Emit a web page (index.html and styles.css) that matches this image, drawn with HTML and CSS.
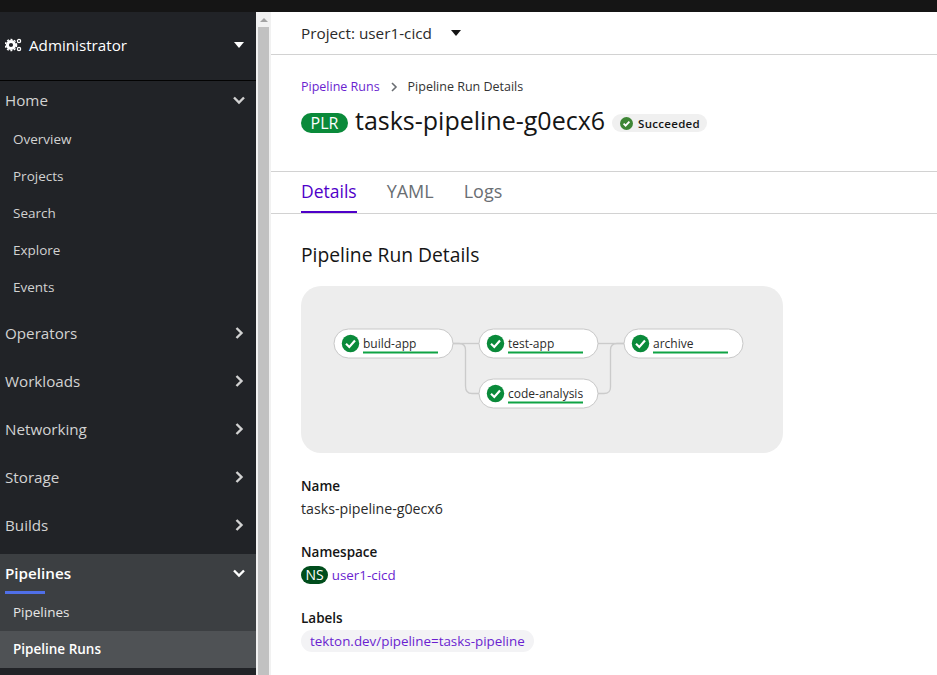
FILE: index.html
```html
<!DOCTYPE html>
<html lang="en">
<head>
    <meta charset="UTF-8">
    <title>Pipeline Run Details</title>
    <link rel="stylesheet" href="styles.css">
</head>
<body>
    <div class="masthead"></div>
    <div class="layout">
        <!-- Sidebar -->
        <nav class="sidebar">
            <div class="perspective">
                <svg class="gears" width="17" height="14" viewBox="0 0 17 14">
                    <circle cx="6" cy="7" r="3.6" fill="none" stroke="#fff" stroke-width="3"/>
                    <circle cx="6" cy="7" r="5.6" fill="none" stroke="#fff" stroke-width="1.4" stroke-dasharray="2 1.6"/>
                    <circle cx="14" cy="3" r="1.6" fill="none" stroke="#fff" stroke-width="1.3"/>
                    <circle cx="14" cy="11" r="1.6" fill="none" stroke="#fff" stroke-width="1.3"/>
                </svg>
                <span class="perspective-name">Administrator</span>
                <span class="caret caret-white"></span>
            </div>
            <div class="nav-group nav-home">
                <div class="nav-title">Home <svg class="chev" width="12" height="12" viewBox="0 0 12 12"><path d="M1 3.5 6 8.5 11 3.5" /></svg></div>
                <a class="nav-sub">Overview</a>
                <a class="nav-sub">Projects</a>
                <a class="nav-sub">Search</a>
                <a class="nav-sub">Explore</a>
                <a class="nav-sub">Events</a>
            </div>
            <div class="nav-title nav-closed">Operators <svg class="chev" width="12" height="12" viewBox="0 0 12 12"><path d="M3.5 1 8.5 6 3.5 11" /></svg></div>
            <div class="nav-title nav-closed">Workloads <svg class="chev" width="12" height="12" viewBox="0 0 12 12"><path d="M3.5 1 8.5 6 3.5 11" /></svg></div>
            <div class="nav-title nav-closed">Networking <svg class="chev" width="12" height="12" viewBox="0 0 12 12"><path d="M3.5 1 8.5 6 3.5 11" /></svg></div>
            <div class="nav-title nav-closed">Storage <svg class="chev" width="12" height="12" viewBox="0 0 12 12"><path d="M3.5 1 8.5 6 3.5 11" /></svg></div>
            <div class="nav-title nav-closed">Builds <svg class="chev" width="12" height="12" viewBox="0 0 12 12"><path d="M3.5 1 8.5 6 3.5 11" /></svg></div>
            <div class="nav-group nav-active">
                <div class="nav-title">Pipelines <svg class="chev" width="12" height="12" viewBox="0 0 12 12"><path d="M1 3.5 6 8.5 11 3.5" /></svg></div>
                <a class="nav-sub">Pipelines</a>
                <a class="nav-sub nav-current">Pipeline Runs</a>
            </div>
        </nav>

        <!-- Scrollbar -->
        <div class="scrollbar">
            <div class="scroll-up"></div>
            <div class="scroll-thumb"></div>
        </div>

        <main class="content">
            <div class="project-bar">
                <span>Project: user1-cicd</span>
                <span class="caret"></span>
            </div>

            <div class="page-head">
                <div class="breadcrumb">
                    <a class="link">Pipeline Runs</a>
                    <svg width="8" height="10" viewBox="0 0 8 10"><path d="M2 1 6 5 2 9" fill="none" stroke="#6a6e73" stroke-width="1.6"/></svg>
                    <span>Pipeline Run Details</span>
                </div>
                <div class="title-row">
                    <span class="badge badge-plr">PLR</span>
                    <h1>tasks-pipeline-g0ecx6</h1>
                    <span class="status">
                        <svg width="13" height="13" viewBox="0 0 13 13"><circle cx="6.5" cy="6.5" r="6.5" fill="#3e8635"/><path d="M3.6 6.7 5.6 8.7 9.4 4.6" fill="none" stroke="#fff" stroke-width="1.8"/></svg>
                        Succeeded
                    </span>
                </div>
            </div>

            <div class="tabs">
                <a class="tab tab-active">Details</a>
                <a class="tab">YAML</a>
                <a class="tab">Logs</a>
            </div>

            <section class="details">
                <h2>Pipeline Run Details</h2>

                <div class="graph">
                    <svg width="482" height="167" viewBox="0 0 482 167">
                        <g fill="none" stroke="#cbcbcb" stroke-width="1.3">
                            <path d="M152 57.500H178"/>
                            <path d="M152 57.500H158Q164.500 57.500 164.500 64V100Q164.500 107.500 171 107.500H178"/>
                            <path d="M297 57.500H323"/>
                            <path d="M297 107.500H303Q309.500 107.500 309.500 101V64Q309.500 57.500 316 57.500H323"/>
                        </g>

                        <g class="node" transform="translate(33 43)">
                            <rect class="node-box" width="119" height="29" rx="14.500"/>
                            <circle class="node-ok" cx="16.500" cy="14.500" r="8.700"/>
                            <path class="node-check" d="M12 14.800 15.300 18 21 11.600"/>
                            <text x="29" y="18.500">build-app</text>
                            <line class="node-line" x1="29" y1="23.500" x2="104" y2="23.500"/>
                        </g>
                        <g class="node" transform="translate(178 43)">
                            <rect class="node-box" width="119" height="29" rx="14.500"/>
                            <circle class="node-ok" cx="16.500" cy="14.500" r="8.700"/>
                            <path class="node-check" d="M12 14.800 15.300 18 21 11.600"/>
                            <text x="29" y="18.500">test-app</text>
                            <line class="node-line" x1="29" y1="23.500" x2="104" y2="23.500"/>
                        </g>
                        <g class="node" transform="translate(178 93)">
                            <rect class="node-box" width="119" height="29" rx="14.500"/>
                            <circle class="node-ok" cx="16.500" cy="14.500" r="8.700"/>
                            <path class="node-check" d="M12 14.800 15.300 18 21 11.600"/>
                            <text x="29" y="18.500">code-analysis</text>
                            <line class="node-line" x1="29" y1="23.500" x2="104" y2="23.500"/>
                        </g>
                        <g class="node" transform="translate(323 43)">
                            <rect class="node-box" width="119" height="29" rx="14.500"/>
                            <circle class="node-ok" cx="16.500" cy="14.500" r="8.700"/>
                            <path class="node-check" d="M12 14.800 15.300 18 21 11.600"/>
                            <text x="29" y="18.500">archive</text>
                            <line class="node-line" x1="29" y1="23.500" x2="104" y2="23.500"/>
                        </g>
                    </svg>
                </div>

                <dl class="props">
                    <dt>Name</dt>
                    <dd>tasks-pipeline-g0ecx6</dd>
                    <dt>Namespace</dt>
                    <dd><span class="badge badge-ns">NS</span> <a class="link">user1-cicd</a></dd>
                    <dt>Labels</dt>
                    <dd><a class="label-chip link">tekton.dev/pipeline=tasks-pipeline</a></dd>
                </dl>
            </section>
        </main>
    </div>
</body>
</html>
```

FILE: styles.css
```css
html, body {
    height: 100%;
}
body {
    margin: 0;
    overflow: hidden;
    font-family: "Open Sans", "Noto Sans", sans-serif;
    font-size: 14px;
    color: #151515;
    background: #fff;
}
.masthead {
    height: 12px;
    background: #151515;
}
.layout {
    display: flex;
    height: 663px;
}

/* Sidebar */
.sidebar {
    width: 256px;
    flex: none;
    background: #212327;
    color: #d2d2d2;
    overflow: hidden;
}
.perspective {
    box-sizing: border-box;
    height: 69px;
    display: flex;
    align-items: center;
    padding: 0 12px 2px 5px;
    border-bottom: 1px solid #030303;
    color: #fff;
    font-size: 15.200px;
    font-weight: 500;
}
.gears {
    margin-right: 7px;
}
.perspective-name {
    flex: 1;
}
.caret {
    display: inline-block;
    width: 0;
    height: 0;
    border-left: 5px solid transparent;
    border-right: 5px solid transparent;
    border-top: 6px solid #151515;
}
.caret-white {
    border-top-color: #fff;
}
.nav-title {
    display: flex;
    justify-content: space-between;
    align-items: center;
    height: 38px;
    padding: 0 11px 0 5px;
    font-size: 15.200px;
}
.nav-closed {
    height: 48px;
}
.chev {
    fill: none;
    stroke: #d2d2d2;
    stroke-width: 2.4;
}
.nav-group .nav-title {
    margin-bottom: 2px;
}
.nav-sub {
    display: block;
    height: 37px;
    line-height: 37px;
    padding-left: 13px;
    font-size: 13.500px;
}
.nav-home {
    margin-bottom: 3px;
}
.nav-active {
    margin-top: 5px;
    background: #3c3f42;
    color: #fff;
    position: relative;
}
.nav-active .nav-title {
    font-weight: 600;
}
.nav-active .chev {
    stroke: #fff;
}
/* blue bar under the active section title */
.nav-active::before {
    content: "";
    position: absolute;
    left: 5px;
    top: 37px;
    width: 40px;
    height: 3px;
    background: #4f6fe8;
}
.nav-active .nav-sub {
    color: #e6e6e6;
}
.nav-active .nav-current {
    background: #4f5255;
    color: #fff;
    font-weight: 600;
}

/* Scrollbar */
.scrollbar {
    width: 15px;
    flex: none;
    background: #f1f1f1;
}
.scroll-up {
    height: 15px;
    position: relative;
}
.scroll-up::after {
    content: "";
    position: absolute;
    left: 4px;
    top: 6px;
    border-left: 4px solid transparent;
    border-right: 4px solid transparent;
    border-bottom: 4px solid #a3a3a3;
}
.scroll-thumb {
    height: 648px;
    margin: 0 2px;
    background: #c1c1c1;
}

/* Content */
.content {
    flex: 1;
    min-width: 0;
}
.project-bar {
    height: 42px;
    display: flex;
    align-items: center;
    gap: 19px;
    padding-left: 30px;
    border-bottom: 1px solid #d2d2d2;
    font-size: 15.300px;
    color: #2a2a2a;
}
.page-head {
    height: 116px;
    padding-left: 30px;
    border-bottom: 1px solid #d2d2d2;
}
.breadcrumb {
    display: flex;
    align-items: center;
    gap: 10px;
    padding-top: 23px;
    font-size: 12.500px;
    line-height: 18px;
    color: #333;
}
.link {
    color: #6a1fd0;
}
.title-row {
    display: flex;
    align-items: center;
    margin-top: 6px;
}
h1 {
    margin: 0 7px;
    font-size: 25px;
    line-height: 36px;
    font-weight: 400;
}
.badge {
    display: inline-block;
    border-radius: 10px;
    color: #fff;
    text-align: center;
}
.badge-plr {
    width: 47px;
    height: 20px;
    margin-top: 6px;
    line-height: 20px;
    font-size: 16px;
    background: #0a8a3a;
}
.badge-ns {
    width: 27px;
    height: 18px;
    line-height: 18px;
    font-size: 14px;
    background: #004d1c;
}
.status {
    display: flex;
    align-items: center;
    gap: 5px;
    height: 18px;
    padding: 0 7px 0 8px;
    margin-top: 6px;
    border-radius: 9px;
    background: #f0f0f0;
    font-size: 11.500px;
    font-weight: 600;
    letter-spacing: 0.3px;
}
.tabs {
    display: flex;
    gap: 30px;
    height: 41px;
    padding-left: 30px;
    border-bottom: 1px solid #d2d2d2;
}
.tab {
    font-size: 18px;
    line-height: 39px;
    color: #6a6e73;
}
.tab-active {
    font-size: 17.500px;
    color: #4f00c9;
    border-bottom: 2px solid #4f00c9;
    height: 39px;
}
.details {
    padding: 27px 0 0 30px;
}
h2 {
    margin: 0 0 18px;
    font-size: 19.300px;
    line-height: 27px;
    font-weight: 400;
}
.graph {
    width: 482px;
    height: 167px;
    border-radius: 20px;
    background: #ededed;
}
.graph svg {
    display: block;
}
.node-box {
    fill: #fff;
    stroke: #c8c8c8;
    stroke-width: 1;
}
.node-ok {
    fill: #0a8a3a;
}
.node-check {
    fill: none;
    stroke: #fff;
    stroke-width: 2.2;
}
.node text {
    font-size: 12px;
    fill: #2b2b2b;
}
.node-line {
    stroke: #0fa344;
    stroke-width: 2;
}
.props {
    margin: 22px 0 0;
    font-size: 14.200px;
    line-height: 22px;
}
.props dt {
    font-weight: 600;
    font-size: 13.500px;
}
.props dd {
    margin: 1px 0 21px;
    color: #2a2a2a;
}
.props .link {
    font-size: 13.400px;
}
.label-chip {
    display: inline-block;
    height: 22px;
    line-height: 22px;
    padding: 0 9px;
    border-radius: 11px;
    background: #f3f3f5;
}
```
